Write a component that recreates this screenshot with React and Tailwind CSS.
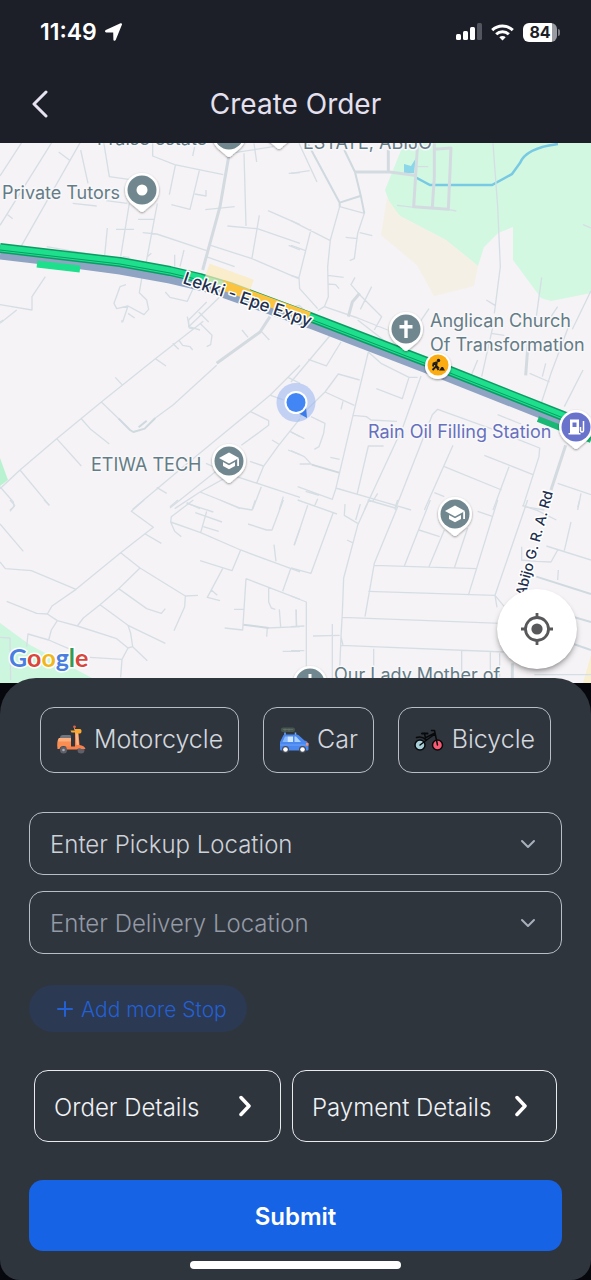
import React, { useState } from 'react'
import { ChevronDown, Plus } from 'lucide-react'

// Streets are grouped in map tiles. Every tile covers 300x190 and is drawn at 3x.
const tiles = [
    {
        id: 'nw',
        x: 0,
        y: 140,
        minor: [
            'M0 108 L70 0', 'M0 256 L160 0', 'M60 325 L242 5', 'M176 36 L208 60', 'M20 222 L38 236', 'M242 30 L264 130',
            'M310 0 L328 110 L386 118', 'M218 190 L290 198', 'M318 182 L382 190', 'M388 190 L362 350', 'M472 190 L438 370',
            'M348 268 H402', 'M414 238 H464', 'M322 264 L314 346', 'M458 10 V48 L524 74 L670 104', 'M526 76 L508 164',
            'M598 92 L570 208 L514 194', 'M584 162 L618 168 V150', 'M584 20 L578 48', 'M616 209 L704 200', 'M428 278 L470 282 L620 332',
            'M690 40 L820 20', 'M732 40 L738 258', 'M682 258 L772 266 L900 310', 'M778 226 L756 354', 'M804 212 L900 254',
            'M866 100 L900 98', 'M866 316 L900 330', 'M632 316 L756 356 L896 416', 'M618 350 L704 380', 'M762 10 L770 66',
            'M524 344 V380', 'M552 330 L540 380', 'M440 352 L454 340', 'M136 410 L96 470 V510 L0 494', 'M50 510 L0 550', 'M378 434 L360 440 L342 490 L350 506 L384 498 L432 524 L446 508 L440 480 L418 458 L426 410',
            'M384 498 L368 546', 'M384 520 L404 534', 'M496 456 L510 472 L562 484 L600 400', 'M660 470 L566 560 M620 486 L566 540 V560 L600 570', 'M596 516 L626 546', 'M140 320 L290 346', 'M368 350 L388 352',
        ],
        wide: ['M686 50 L660 200 L608 390'],
    },
    {
        id: 'ne',
        x: 291,
        y: 140,
        minor: [
            'M0 100 L56 92', 'M24 10 L78 126', 'M0 242 L118 302', 'M60 268 L24 412 L26 446 L80 506', 'M0 316 L44 332', 'M0 406 L24 414',
            'M146 200 L118 300 L110 380 L112 470 L100 500 L80 512', 'M146 200 L220 220 L200 280 L190 356 L176 362', 'M164 292 L200 296', 'M206 278 L244 287', 'M110 406 L158 412', 'M112 432 L134 434 L144 446',
            'M192 412 L180 434 L206 464 L272 530 L250 570', 'M242 440 L208 508', 'M100 500 L200 534 L290 570', 'M606 10 L620 200 L628 380 L610 520', 'M586 480 L612 496',
            'M752 412 L736 530', 'M800 500 L780 530', 'M900 452 L844 568', 'M876 254 L900 264', 'M318 196 L370 202', 'M376 80 H412', 'M470 208 L496 213', 'M414 506 L384 550', 'M10 500 L24 496 L50 520',
        ],
        wide: ['M292 30 V96', 'M192 96 H296 L370 106', 'M380 10 L368 200 L472 208 L480 24 L428 28', 'M430 10 V110 L424 202', 'M206 460 L184 486 L172 530'],
        mid: ['M50 10 L146 188 V200', 'M160 30 L192 96 L210 170 L220 220', 'M146 188 L208 168'],
    },
    {
        id: 'w',
        x: 0,
        y: 320,
        minor: [
            'M0 506 L60 450 L170 356 L304 246 L466 116 L610 4 M562 -10 L568 24 L580 26', 'M346 172 L368 196', 'M304 246 L360 300', 'M242 294 L270 326 L328 372', 'M170 356 L244 438', 'M60 450 L148 556', 'M466 116 L498 138',
            'M518 70 L536 88', 'M536 60 L548 76 L570 80 L578 90', 'M600 10 L636 46 L632 74 L620 80', 'M726 30 L744 52', 'M784 34 L808 60',
            'M466 294 L520 254 L650 136', 'M398 568 L560 432 L810 226 L900 136', 'M750 274 L806 302 V316 L724 376', 'M812 226 L850 240', 'M864 172 L900 190', 'M900 296 L836 376 L790 440 L770 490',
            'M816 360 L836 372', 'M870 334 L900 350', 'M864 390 L900 404', 'M750 424 L790 438', 'M510 564 L650 452', 'M524 566 L600 516 L700 460', 'M470 502 L500 520', 'M600 516 L660 540 L720 566', 'M710 470 L900 532', 'M784 500 L758 568', 'M850 530 L838 568', 'M560 548 L600 566',
            'M0 500 L40 546 L42 560 L30 570', 'M618 430 L640 440', 'M366 0 V8', 'M0 6 L10 0',
        ],
        wide: ['M810 -10 L780 36 L650 130'],
        mid: ['M356 296 L390 330 L400 336 L434 326 L466 294', 'M416 322 L440 302'],
    },
    {
        id: 'e',
        x: 291,
        y: 320,
        minor: [
            'M116 48 L0 186', 'M150 66 L106 138 L52 118', 'M232 96 L186 286 L134 508 L124 538 L20 500', 'M206 180 L142 162 L102 216 L26 290', 'M102 216 L190 256', 'M156 244 L150 268', 'M256 206 L334 236 L354 172 L270 130 L232 96', 'M380 172 L354 172',
            'M390 168 L336 320 L220 570', 'M186 286 L226 290 L240 300 L318 304', 'M278 378 H232 L198 524', 'M60 290 L102 310 L98 340 L84 380 L70 388', 'M0 336 L40 356', 'M0 392 L40 410 L62 434', 'M118 412 L146 418', 'M26 432 H62',
            'M134 504 L244 536 L360 570', 'M44 514 L84 526', 'M312 570 L424 284 L440 268 L600 326 L746 384 L744 410 L696 560', 'M620 284 L690 312', 'M486 376 L400 570', 'M460 440 L632 510', 'M580 406 L726 464', 'M654 440 L606 570', 'M430 518 L460 530',
            'M610 0 L572 170', 'M560 120 L534 182', 'M600 40 L640 46', 'M840 0 L780 160 L744 270', 'M876 150 L820 260', 'M716 160 L776 186', 'M764 130 L754 170', 'M800 490 L900 524', 'M870 520 L860 570', 'M700 560 L760 570', 'M260 520 L244 546', 'M200 0 L290 70',
        ],
        wide: ['M824 376 L780 510', 'M712 60 L704 166'],
        mid: ['M62 434 L144 458'],
    },
    {
        id: 'sw',
        x: 0,
        y: 500,
        minor: [
            'M30 0 L44 16 L30 34', 'M132 0 L148 16', 'M0 72 L70 154', 'M432 0 L394 34 L460 82 L362 158 L228 268 L156 318 L142 342 L110 340 L20 304', 'M436 102 L484 130', 'M0 186 L16 206 L94 212 L228 268',
            'M362 158 L420 204 L556 288 L594 286', 'M420 204 L356 266 L300 314 L250 354 L232 378', 'M556 288 L554 320 L522 392', 'M356 266 L440 326 L484 340 L496 326', 'M300 314 L384 376 L496 430', 'M142 342 L172 362 L232 378 L350 416 L384 444 L366 478 L362 532',
            'M172 362 L154 390 L146 420', 'M80 440 L84 402 L146 420 L206 446', 'M384 376 L392 400 L398 440 L442 482', 'M384 444 L398 440', 'M270 472 L366 478', 'M580 0 L514 50 L512 66 L602 98 L722 150 L900 216',
            'M512 66 L524 94 L544 110', 'M560 10 L640 36', 'M620 34 L602 98', 'M586 38 L666 66', 'M610 80 L656 94', 'M660 0 L720 24 L756 30 L766 0', 'M744 72 L800 90 H816 L850 0', 'M900 86 L882 136', 'M822 134 L828 184', 'M722 150 L696 212 L600 182', 'M668 206 L622 292 L660 302', 'M634 270 L652 286',
            'M738 236 L900 298', 'M738 236 L728 390 L674 384', 'M702 328 H730', 'M872 206 L848 274', 'M806 262 V306 L814 324 L826 328', 'M800 384 L900 380', 'M802 384 L800 410', 'M838 328 L842 380', 'M888 328 L890 380', 'M848 454 H900', 'M0 412 L30 414 L32 540', 'M510 20 L534 0',
        ],
        wide: [],
        mid: ['M730 374 L806 384'],
    },
    {
        id: 'se',
        x: 291,
        y: 500,
        minor: [
            'M20 0 L138 42', 'M50 16 L10 136', 'M126 40 L60 220 L0 204', 'M80 -4 L70 20', 'M162 12 L160 46 L200 70', 'M208 12 L194 60', 'M234 0 L200 76 L158 234 L154 340 L150 410 L146 510', 'M168 120 L184 128', 'M230 0 L312 24 L320 0',
            'M320 20 L250 190 L222 350', 'M418 0 L340 198', 'M384 90 L446 110', 'M460 90 L414 200', 'M530 84 L490 204', 'M250 196 L556 206', 'M620 0 L532 286', 'M560 34 L606 50', 'M232 274 L612 286 L640 320', 'M710 0 L612 286', 'M154 352 L630 370', 'M150 436 L640 456', 'M612 286 L618 322',
            'M0 288 L46 306 V540', 'M0 380 L40 378', 'M16 330 V380', 'M0 452 H40', 'M66 408 L146 406', 'M124 372 V540', 'M150 410 L156 436', 'M248 446 V510', 'M512 450 V520', 'M598 454 V530', 'M626 460 V530',
            'M694 16 L740 32 L796 60', 'M840 66 L820 152', 'M766 138 L900 180', 'M800 150 L780 186 L736 184 L690 180', 'M692 140 V180', 'M802 210 L800 240', 'M866 0 L860 22', 'M730 524 H900',
        ],
        wide: ['M664 490 V540'],
        mid: ['M736 230 L900 282', 'M830 346 L900 366', 'M830 426 L900 450'],
    },
]

const vehicles = [
    { name: 'Motorcycle', icon: ScooterIcon },
    { name: 'Car', icon: CarIcon },
    { name: 'Bicycle', icon: BicycleIcon },
]

function ScooterIcon() {
    return (
        <svg width="30" height="30" viewBox="0 0 30 30" aria-hidden="true">
            <circle cx="7.500" cy="25" r="3.500" fill="#5f5f69" />
            <circle cx="7.500" cy="25" r="1.300" fill="#a9a9b3" />
            <circle cx="25" cy="25" r="3.500" fill="#5f5f69" />
            <path d="M4 13c0-2 1-3 3-3h6.500c1 0 1.500.5 1.500 1.500V13z" fill="#74747c" />
            <path d="M3 13h12v10.500h-3.500C11 22 9.500 21 7.500 21S4 22 3.500 24H1.500C1 19 1 15.500 3 13z" fill="#f98d52" />
            <path d="M3 13h12v3.500H2C2.200 15 2.500 13.800 3 13z" fill="#fbae7c" />
            <path d="M10 21.500h9V8h3.500l1 12c3 .3 5.500 1.800 6 4h-4c-1.500-1-3-1-4.500.5H11z" fill="#f98149" />
            <path d="M19.500 8H22l.8 12h-2.300z" fill="#fbb887" />
            <path d="M14.500 5.500h6l.5 2h-5.500zM19 4h5c1 0 1.500 1 1.500 2.200S25 8.500 24 8.500h-5z" fill="#fba92e" />
            <path d="M18.500 2.500v3" stroke="#b98b78" strokeWidth="1" />
            <circle cx="18.500" cy="1.800" r="1.400" fill="#e2604a" />
        </svg>
    )
}

function CarIcon() {
    return (
        <svg width="30" height="30" viewBox="0 0 30 30" aria-hidden="true">
            <rect x="2" y="2.500" width="14" height="4.500" rx="2" fill="#46564f" />
            <path d="M4 4.500h10M6 3.500v3M10 3.500v3" stroke="#65756c" strokeWidth=".7" />
            <path d="M6 7.500v2.500M16.500 7.500v2.500" stroke="#77aef8" strokeWidth="1.500" />
            <path d="M1 17l3-6c.5-1 1-1.500 2-1.500h11c1.500 0 2.500.5 3.500 1.500l5 4.500c2.500.5 4 2 4 4.500v4c0 1-.5 1.500-1.500 1.500H2.500C1.500 25.500 1 25 1 24z" fill="#4a87ee" />
            <path d="M3.500 17 6 11.500h2.500V17z" fill="#86b9fb" />
            <path d="M8.500 11.500H14V17H8.500z" fill="#cfe6ff" />
            <path d="M15.500 11.500H17l5 5.500h-6.500z" fill="#a9d2ff" />
            <path d="M1 20h28" stroke="#6ca2fa" strokeWidth="1" />
            <rect x="27" y="18" width="2.500" height="2.500" fill="#ff8d61" />
            <circle cx="6.500" cy="24.500" r="3.500" fill="#444b58" />
            <circle cx="6.500" cy="24.500" r="2.300" fill="#fff" />
            <circle cx="23.500" cy="24.500" r="3.500" fill="#444b58" />
            <circle cx="23.500" cy="24.500" r="2.300" fill="#fff" />
        </svg>
    )
}

function BicycleIcon() {
    return (
        <svg width="30" height="30" viewBox="0 0 30 30" fill="none" stroke="#08090b" strokeWidth="1.500" strokeLinecap="round" strokeLinejoin="round" aria-hidden="true">
            <circle cx="6" cy="20" r="5" fill="#a6cfd8" />
            <circle cx="23.500" cy="20" r="5" fill="#fb5a74" />
            <path d="M2.500 12.500c3-1 6.500-.5 9 2M10 13.500 21 8M6 20l6-4.500 9-6.500M23.500 20 20.500 5.500h-3M10.500 8.500l1.500 7" />
            <path d="M8 8.500h5.500" strokeWidth="2" />
        </svg>
    )
}

function Pin({ x, y, color = '#71878f', children }) {
    return (
        <g transform={`translate(${x} ${y})`}>
            <path d="M0 22c-1.800 0-2.800-1.500-4-2.700C-6.500 16.500-17 11.500-17 0a17 17 0 0 1 34 0c0 11.500-10.500 16.500-13 19.300C2.800 20.500 1.800 22 0 22z" fill="#fff" filter="url(#pinShadow)" />
            <circle r="14.500" fill={color} />
            {children}
        </g>
    )
}

function GraduationCap() {
    return (
        <g fill="#fff">
            <path d="M0-8.500 10-3 0 2.500-10-3z" />
            <path d="M-6 1 0 4.300 6 1v4L0 8.300-6 5zM8.200-2.500H10v7.500H8.200z" />
        </g>
    )
}

function Map() {
    return (
        <svg
            className="block h-[540px] w-full bg-[#f5f3f5]"
            viewBox="0 143 591 540"
            preserveAspectRatio="xMidYMid slice"
            role="img"
            aria-label="Map"
        >
            <defs>
                <filter id="pinShadow" x="-30%" y="-30%" width="160%" height="170%">
                    <feDropShadow dx="0" dy="1" stdDeviation="1.200" floodOpacity=".4" />
                </filter>
            </defs>

            {/* Parks and sand */}
            <path d="M404 143 385 190 390 204 400 216 446 240 478 266 484 247 498 233 513 227 V260 L541 298 551 301 591 293 V143z" fill="#d2f8e1" />
            <path d="M387 198 381 235 417 265 434 296 474 286 478 266 446 240 400 216z" fill="#f4f0e6" />
            <path d="M0 458 8 480 0 486z" fill="#b9f2d0" />
            <path d="M0 623 30 645 92 678 V683 H0z" fill="#cdf6de" />
            <path d="M591 655 583 683H591z" fill="#f7efd0" />
            <path d="M404 164v9h10l2-15-5 8z" fill="#8bd6e8" />
            <path d="M415 177 430 185H492L512 174 520 163Q526 148 558 144" fill="none" stroke="#78c9e3" strokeWidth="2.500" />

            {/* Streets */}
            {tiles.map((tile) => (
                <g key={tile.id} transform={`translate(${tile.x} ${tile.y}) scale(0.33333)`} fill="none" strokeLinejoin="round">
                    <path d={tile.minor.join(' ')} stroke="#d6dee5" strokeWidth="4" />
                    <path d={(tile.mid || []).join(' ')} stroke="#cfd9e0" strokeWidth="6" />
                    <path d={tile.wide.join(' ')} stroke="#d3dbe1" strokeWidth="9" />
                </g>
            ))}

            {/* Expressway with traffic */}
            <g fill="none" strokeLinejoin="round">
                <path d="M0 255 60 262 120 270 170 279 200 286 230 295 310 324 440 374 591 434" stroke="#8fa3c3" strokeWidth="9" />
                <path d="M0 248 60 255 120 262 170 271 200 278 230 287 310 317 440 367 591 427" stroke="#0d9b65" strokeWidth="10" />
                <path d="M0 248 60 255 120 262 170 271 200 278 230 287 310 317 440 367 591 427" stroke="#1ddf8c" strokeWidth="7" />
                <path d="M0 250 60 257 120 264 170 273 200 280 230 289 310 319 440 369 591 429" stroke="#0d9b65" strokeWidth="1" />
                <path d="M37 264 80 269" stroke="#1ddf8c" strokeWidth="7" />
                <path d="M206 274 250 290" stroke="#fbe9ba" strokeWidth="22" opacity=".7" />
                <path d="M222 285 230 288 309 317" stroke="#fbc33f" strokeWidth="10" />
                <path d="M222 294 309 325" stroke="#8fa3c3" strokeWidth="7" />
                <path d="M538 419 591 440" stroke="#19b875" strokeWidth="6" />
            </g>

            {/* Place labels */}
            <g
                className="font-['Inter',sans-serif]"
                fontSize="18"
                fill="#647c86"
                stroke="#f8f7f9"
                strokeWidth="3"
                strokeLinejoin="round"
                paintOrder="stroke"
            >
                <text x="97" y="145">Praise estate</text>
                <text x="303" y="149">ESTATE, ABIJO</text>
                <text x="2" y="199">Private Tutors</text>
                <text x="430" y="327">Anglican Church</text>
                <text x="430" y="351">Of Transformation</text>
                <text x="91" y="471">ETIWA TECH</text>
                <text x="334" y="681">Our Lady Mother of</text>
                <text x="368" y="438" fill="#6670bd">Rain Oil Filling Station</text>
            </g>
            <g className="font-['Inter',sans-serif]" fontWeight="500" fill="#22304f" stroke="#fff" strokeWidth="3" strokeLinejoin="round" paintOrder="stroke">
                <text transform="translate(182 283) rotate(19)" fontSize="17">Lekki - Epe Expy</text>
                <text transform="translate(525 597) rotate(-75)" fontSize="14">Abijo G. R. A. Rd</text>
            </g>

            {/* Pins */}
            <Pin x="229" y="135" />
            <Pin x="279" y="127" />
            <Pin x="142" y="190">
                <circle r="5.500" fill="#fff" />
            </Pin>
            <Pin x="406" y="329">
                <path d="M-1.700-8.500h3.400v4.500H6.500v3.400H1.700V9h-3.400V-.6h-4.800V-4h4.800z" fill="#fff" />
            </Pin>
            <Pin x="229" y="461">
                <GraduationCap />
            </Pin>
            <Pin x="455" y="514">
                <GraduationCap />
            </Pin>
            <Pin x="576" y="427" color="#6a73cc">
                <path d="M-6-7.500H3V6H4.500v1.500h-12V6H-6zM-3.500-4.500V0h4v-4.500z" fill="#fff" fillRule="evenodd" />
                <path d="M4.500 0v3.500a1.500 1.500 0 0 0 3 0V-6" fill="none" stroke="#fff" strokeWidth="1.500" />
            </Pin>
            <Pin x="310" y="683">
                <path d="M-1.500-9h3v6h-3z" fill="#fff" />
            </Pin>

            {/* Road works */}
            <circle cx="438" cy="366" r="13" fill="#fff" filter="url(#pinShadow)" />
            <circle cx="438" cy="365" r="10.500" fill="#fbac12" />
            <circle cx="438.500" cy="360.500" r="1.700" fill="#1d1a14" />
            <path d="M437 362l-3.500 1.500-.5 3M437 362l-1 4.500-3.500 3.500M436 366l2.500 4M434 363l5 5.500" fill="none" stroke="#1d1a14" strokeWidth="1.800" />
            <path d="M439 370.500l2.500-3.500h1.500l2 3.500z" fill="#1d1a14" />

            {/* Current position */}
            <circle cx="296" cy="402.500" r="19.500" fill="#8fb0f2" opacity=".5" />
            <path d="M298 413l9 5-1-11z" fill="#3b7ce8" />
            <circle cx="296" cy="402.500" r="11.500" fill="#fff" />
            <circle cx="296" cy="402.500" r="9.500" fill="#4285f4" />

            <text x="9" y="667" className="font-['Lato',sans-serif]" fontSize="25" fontWeight="700" stroke="#fff" strokeWidth="3" paintOrder="stroke">
                <tspan fill="#4a7fe0">G</tspan>
                <tspan fill="#d8463c">o</tspan>
                <tspan fill="#f0b71d">o</tspan>
                <tspan fill="#4a7fe0">g</tspan>
                <tspan fill="#359a52">l</tspan>
                <tspan fill="#d8463c">e</tspan>
            </text>
        </svg>
    )
}

function StatusBar() {
    return (
        <div className="flex h-16 items-center justify-between pr-[31px] pl-10 text-white">
            <div className="flex items-center gap-2">
                <span className="text-[23px] font-semibold">11:49</span>
                <svg width="17" height="18" viewBox="0 0 17 18" fill="#fff" aria-hidden="true">
                    <path d="M15.500.300C16.500-.1 17.300.700 16.900 1.700L10.700 17c-.5 1.200-2.200 1-2.300-.3L8.200 9.500 1.200 9.400C-.1 9.300-.4 7.700.8 7.100z" />
                </svg>
            </div>
            <div className="flex items-center gap-[9px]">
                <svg width="26" height="18" viewBox="0 0 26 18" fill="#fff" aria-hidden="true">
                    <rect y="11" width="5" height="6" rx="1.500" />
                    <rect x="7" y="8" width="5" height="9" rx="1.500" />
                    <rect x="14" y="4" width="5" height="13" rx="1.500" />
                    <rect x="21" y="0" width="5" height="17" rx="1.500" fill="#54565f" />
                </svg>
                <svg width="23" height="17" viewBox="0 0 23 17" fill="none" stroke="#fff" strokeWidth="3" aria-hidden="true">
                    <path d="M1.200 6.200a15 15 0 0 1 20.600 0M5.200 10.300a9 9 0 0 1 12.600 0" />
                    <path d="M11.500 16.500l-3.200-3.300a4.600 4.600 0 0 1 6.400 0z" fill="#fff" stroke="none" />
                </svg>
                <div className="flex items-center gap-px">
                    <span className="flex h-[19px] w-[34px] items-center justify-center rounded-md bg-linear-to-r from-white from-84% to-[#9a9ba1] to-84% text-base leading-none font-bold text-[#1c1e28]">
                        84
                    </span>
                    <span className="h-[7px] w-[2px] rounded-r-full bg-[#7b7c83]" />
                </div>
            </div>
        </div>
    )
}

function LocationSelect({ id, label, className }) {
    return (
        <div className="relative">
            <label htmlFor={id} className="sr-only">{label}</label>
            <select
                id={id}
                defaultValue=""
                className={`h-[63px] w-full appearance-none rounded-[14px] border border-[#b9bec6] bg-transparent pt-[3px] pr-14 pl-5 text-2xl font-light ${className}`}
            >
                <option value="">{label}</option>
            </select>
            <ChevronDown className="pointer-events-none absolute top-5 right-[22px] text-[#a8afbd]" size={24} strokeWidth={2} />
        </div>
    )
}

function DetailsButton({ label }) {
    return (
        <button type="button" className="flex h-[72px] items-center justify-between rounded-[14px] border border-[#e8eaee] pr-[29px] pl-[19px] text-2xl font-light whitespace-nowrap text-[#f0f2f5]">
            <span className="pt-[3px]">{label}</span>
            <svg width="12" height="22" viewBox="0 0 12 22" fill="none" stroke="#fff" strokeWidth="3.500" strokeLinecap="round" strokeLinejoin="round" aria-hidden="true">
                <path d="M2 2.500l8 8.500-8 8.500" />
            </svg>
        </button>
    )
}

const App = () => {
    const [vehicle, setVehicle] = useState('')

    return (
        <div className="min-h-screen bg-[#07080d] font-['Inter',sans-serif]">
            <header className="bg-[#1c1e28]">
                <StatusBar />
                <div className="grid h-[79px] grid-cols-[80px_1fr_80px] items-center">
                    <button type="button" aria-label="Back" className="justify-self-center">
                        <svg width="16" height="28" viewBox="0 0 16 28" fill="none" stroke="#e6e2f0" strokeWidth="3" strokeLinecap="round" strokeLinejoin="round" aria-hidden="true">
                            <path d="M14 2L2 14l12 12" />
                        </svg>
                    </button>
                    <h1 className="text-center text-[28px] text-[#e4e0ee]">Create Order</h1>
                </div>
            </header>

            <div className="relative">
                <Map />
                <button
                    type="button"
                    aria-label="My location"
                    className="absolute right-[14px] bottom-[14px] flex size-20 items-center justify-center rounded-full bg-white shadow-md shadow-black/30"
                >
                    <svg width="32" height="32" viewBox="0 0 32 32" fill="none" stroke="#58585a" strokeWidth="2.800" aria-hidden="true">
                        <circle cx="16" cy="16" r="11.500" />
                        <circle cx="16" cy="16" r="5.600" fill="#58585a" stroke="none" />
                        <path d="M16 0v5M16 27v5M0 16h5M27 16h5" />
                    </svg>
                </button>
            </div>

            <main className="relative -mt-[5px] rounded-t-[36px] rounded-b-[20px] bg-[#2f353d] px-[29px] pt-[29px] pb-[11px]">
                {/* Vehicle type */}
                <div className="flex justify-between px-[11px]">
                    {vehicles.map(({ name, icon: Icon }) => (
                        <button
                            key={name}
                            type="button"
                            aria-pressed={vehicle === name}
                            onClick={() => setVehicle(name)}
                            className="flex h-[66px] items-center gap-2 rounded-[14px] border border-[#b9bec6] px-[15px] text-[25px] font-light text-[#d3d7de]"
                        >
                            <Icon />
                            {name}
                        </button>
                    ))}
                </div>

                {/* Locations */}
                <div className="mt-[39px] flex flex-col gap-4">
                    <LocationSelect id="pickup" label="Enter Pickup Location" className="text-[#cdd1d8]" />
                    <LocationSelect id="delivery" label="Enter Delivery Location" className="text-[#949aa6]" />
                </div>
                <button type="button" className="mt-[31px] flex h-[47px] items-center gap-1 rounded-full bg-[#2b3953] pr-5 pl-6 text-[21px] font-light text-[#2360d4]">
                    <Plus size={24} strokeWidth={2} />
                    <span className="pt-[3px]">Add more Stop</span>
                </button>

                <div className="mt-[38px] grid grid-cols-[247fr_265fr] gap-[11px] px-[5px]">
                    <DetailsButton label="Order Details" />
                    <DetailsButton label="Payment Details" />
                </div>

                <button type="submit" className="mt-[38px] h-[71px] w-full rounded-[14px] bg-[#1763e5] pt-[3px] text-2xl font-semibold text-white">
                    Submit
                </button>
                <div className="mx-auto mt-[10px] h-2 w-[211px] rounded-full bg-white" />
            </main>
        </div>
    )
}

export default App
